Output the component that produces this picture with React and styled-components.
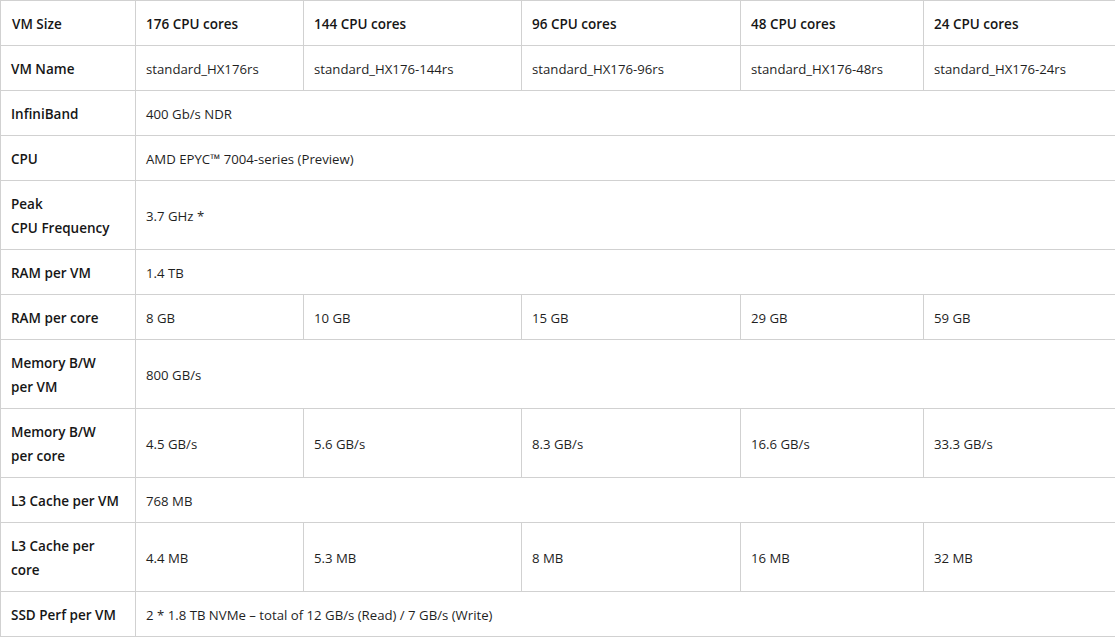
import styled, { createGlobalStyle } from "styled-components";

const GlobalStyle = createGlobalStyle`
  html, body {
    margin: 0;
    padding: 0;
    background: #ffffff;
    overflow: hidden;
  }
  body {
    font-family: "Segoe UI", "Open Sans", "Noto Sans", sans-serif;
    color: #171717;
  }
`;

const Table = styled.table`
  border-collapse: collapse;
  table-layout: fixed;
  width: 1124px;
  font-size: 13.5px;
  line-height: 24px;
`;

const Cell = styled.td`
  border: 1px solid #d1d1d1;
  padding: 11px 10px 9px;
  vertical-align: middle;
  text-align: left;
  white-space: nowrap;
  font-weight: ${(p) => (p.$head ? 600 : 400)};
  color: ${(p) => (p.$head ? "#161616" : "#1f1f1f")};
  font-size: ${(p) => (p.$head ? "13.5px" : "13.2px")};
`;

const HeadCell = styled(Cell).attrs({ as: "th" })`
  padding-left: ${(p) => (p.$first ? "11px" : "10px")};
`;

const widths = [135, 168, 218, 219, 183, 201];

const cores = ["176 CPU cores", "144 CPU cores", "96 CPU cores", "48 CPU cores", "24 CPU cores"];

const rows = [
  { label: "VM Name", values: ["standard_HX176rs", "standard_HX176-144rs", "standard_HX176-96rs", "standard_HX176-48rs", "standard_HX176-24rs"] },
  { label: "InfiniBand", values: ["400 Gb/s NDR"] },
  { label: "CPU", values: ["AMD EPYC™ 7004-series (Preview)"] },
  { label: ["Peak", "CPU Frequency"], values: ["3.7 GHz *"] },
  { label: "RAM per VM", values: ["1.4 TB"] },
  { label: "RAM per core", values: ["8 GB", "10 GB", "15 GB", "29 GB", "59 GB"] },
  { label: ["Memory B/W", "per VM"], values: ["800 GB/s"] },
  { label: ["Memory B/W", "per core"], values: ["4.5 GB/s", "5.6 GB/s", "8.3 GB/s", "16.6 GB/s", "33.3 GB/s"] },
  { label: "L3 Cache per VM", values: ["768 MB"] },
  { label: ["L3 Cache per", "core"], values: ["4.4 MB", "5.3 MB", "8 MB", "16 MB", "32 MB"] },
  { label: "SSD Perf per VM", values: ["2 * 1.8 TB NVMe – total of 12 GB/s (Read) / 7 GB/s (Write)"] },
];

function Label({ label }) {
  if (Array.isArray(label)) {
    return (
      <>
        {label[0]}
        <br />
        {label[1]}
      </>
    );
  }
  return label;
}

export default function App() {
  return (
    <>
      <GlobalStyle />
      <Table>
        <colgroup>
          {widths.map((w, i) => (
            <col key={i} style={{ width: w }} />
          ))}
        </colgroup>
        <thead>
          <tr>
            <HeadCell $head $first>VM Size</HeadCell>
            {cores.map((c) => (
              <HeadCell $head key={c}>{c}</HeadCell>
            ))}
          </tr>
        </thead>
        <tbody>
          {rows.map((r, i) => (
            <tr key={i}>
              <Cell $head>
                <Label label={r.label} />
              </Cell>
              {r.values.length === 1 ? (
                <Cell colSpan={5}>{r.values[0]}</Cell>
              ) : (
                r.values.map((v) => <Cell key={v}>{v}</Cell>)
              )}
            </tr>
          ))}
        </tbody>
      </Table>
    </>
  );
}
